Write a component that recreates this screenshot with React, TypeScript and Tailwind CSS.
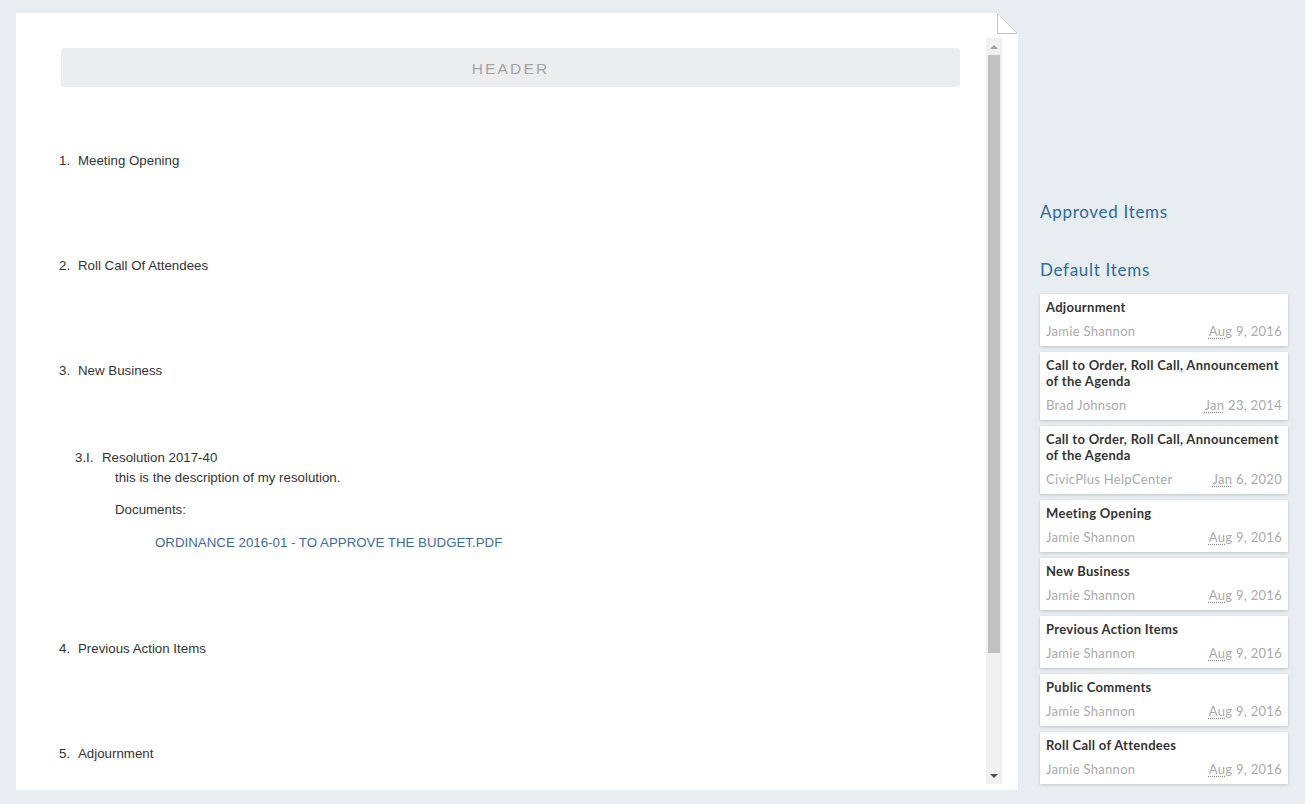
const cards = [
  { title: "Adjournment", author: "Jamie Shannon", month: "Aug", rest: " 9, 2016" },
  {
    title: "Call to Order, Roll Call, Announcement of the Agenda",
    author: "Brad Johnson",
    month: "Jan",
    rest: " 23, 2014",
  },
  {
    title: "Call to Order, Roll Call, Announcement of the Agenda",
    author: "CivicPlus HelpCenter",
    month: "Jan",
    rest: " 6, 2020",
  },
  { title: "Meeting Opening", author: "Jamie Shannon", month: "Aug", rest: " 9, 2016" },
  { title: "New Business", author: "Jamie Shannon", month: "Aug", rest: " 9, 2016" },
  { title: "Previous Action Items", author: "Jamie Shannon", month: "Aug", rest: " 9, 2016" },
  { title: "Public Comments", author: "Jamie Shannon", month: "Aug", rest: " 9, 2016" },
  { title: "Roll Call of Attendees", author: "Jamie Shannon", month: "Aug", rest: " 9, 2016" },
];

const AgendaItem = ({ num, text, className }: { num: string; text: string; className: string }) => {
  return (
    <div className={`flex h-5 items-center pl-[43px] ${className}`}>
      <span className="w-[19px]">{num}</span>
      <span>{text}</span>
    </div>
  );
};

const Scrollbar = () => {
  return (
    <div className="mb-[6px] mt-[25px] flex w-4 flex-col bg-[#f1f1f1]">
      <div className="flex h-[17px] items-center justify-center">
        <div className="h-0 w-0 border-x-[4px] border-b-[4px] border-x-transparent border-b-[#a3a3a3]"></div>
      </div>
      <div className="mx-[2px] h-[598px] bg-[#c1c1c1]"></div>
      <div className="grow"></div>
      <div className="flex h-[17px] items-center justify-center">
        <div className="h-0 w-0 border-x-[4px] border-t-[4px] border-x-transparent border-t-[#505050]"></div>
      </div>
    </div>
  );
};

const Document = () => {
  return (
    <div className="relative ml-4 mt-[13px] flex h-[777px] w-[1002px] bg-white">
      <svg className="absolute right-0 top-0" width="22" height="22" viewBox="0 0 22 22">
        <polygon points="1,0 22,0 22,21" fill="#e8edf1" />
        <polygon points="1,0 21,20 1,20" fill="#ffffff" />
        <polyline points="1.5,0 1.5,20.5 21,20.5" fill="none" stroke="#c4c4c4" strokeWidth="1" />
        <line x1="1" y1="0" x2="21.5" y2="20.5" stroke="#d8d8d8" strokeWidth="1" />
      </svg>

      <div className="w-[970px] font-['Liberation_Sans',Arial,sans-serif] text-[13.3px] text-[#333]">
        <div className="ml-[45px] mt-[35px] flex h-[39px] w-[899px] items-center justify-center rounded-[3px] bg-[#ecedef] pt-[3px] text-[15.5px] tracking-[0.14em] text-[#a4a4a4]">
          HEADER
        </div>

        <AgendaItem num="1." text="Meeting Opening" className="mt-[64px]" />
        <AgendaItem num="2." text="Roll Call Of Attendees" className="mt-[85px]" />
        <AgendaItem num="3." text="New Business" className="mt-[85px]" />

        <div className="mt-[67px] flex h-5 items-center pl-[59px]">
          <span className="w-[27px]">3.I.</span>
          <span>Resolution 2017-40</span>
        </div>
        <div className="flex h-5 items-center pl-[99px]">this is the description of my resolution.</div>
        <div className="mt-3 flex h-5 items-center pl-[99px]">Documents:</div>
        <div className="mt-[13px] flex h-5 items-center pl-[139px] text-[#3f6a9c]">
          ORDINANCE 2016-01 - TO APPROVE THE BUDGET.PDF
        </div>

        <AgendaItem num="4." text="Previous Action Items" className="mt-[86px]" />
        <AgendaItem num="5." text="Adjournment" className="mt-[85px]" />
      </div>

      <Scrollbar />
    </div>
  );
};

const Sidebar = () => {
  return (
    <div className="ml-[22px] w-[248px] font-['Lato','Open_Sans',sans-serif]">
      <h2 className="mt-[200px] h-6 text-[17px] leading-6 tracking-[0.7px] text-[#2d6b9d]">Approved Items</h2>
      <h2 className="mt-[34px] h-6 text-[17px] leading-6 tracking-[0.7px] text-[#2d6b9d]">Default Items</h2>
      <div className="mt-[12px] flex flex-col gap-[6px]">
        {cards.map((c, i) => (
          <div key={i} className="bg-white px-[6px] pb-[7px] pt-[5px] shadow-[0_1px_3px_rgba(0,0,0,0.18)]">
            <div className="text-[13px] font-bold leading-4 tracking-[0.3px] text-[#333]">{c.title}</div>
            <div className="mt-2 flex justify-between text-[13px] leading-4 tracking-[0.3px] text-[#aaa]">
              <span>{c.author}</span>
              <span>
                <abbr className="underline decoration-dotted decoration-[#888] underline-offset-2">{c.month}</abbr>
                {c.rest}
              </span>
            </div>
          </div>
        ))}
      </div>
    </div>
  );
};

export default function App() {
  return (
    <div className="flex h-[804px] w-full overflow-hidden bg-[#e8edf1]">
      <Document />
      <Sidebar />
    </div>
  );
}
